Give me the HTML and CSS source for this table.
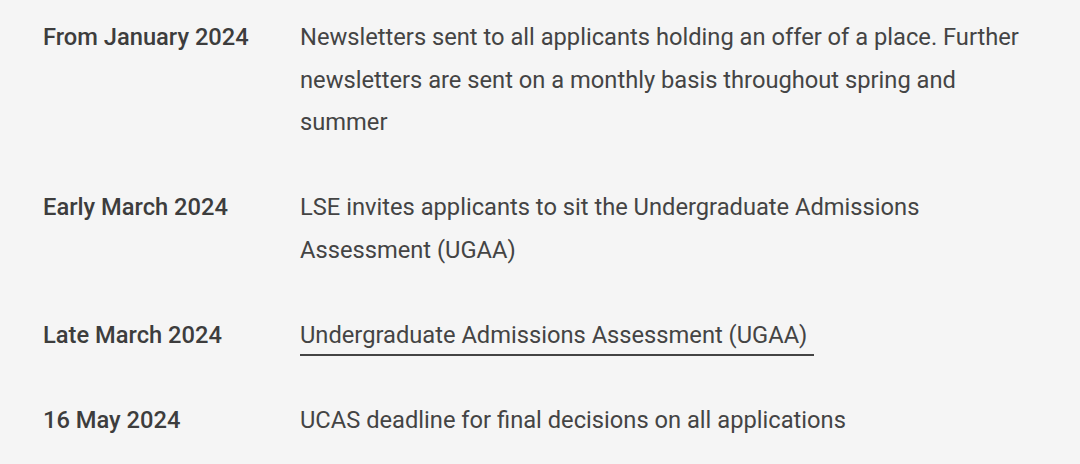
FILE: index.html
```html
<!DOCTYPE html>
<html lang="en">
<head>
<meta charset="utf-8">
<link rel="stylesheet" href="styles.css">
</head>
<body>
<dl class="timeline">
  <div class="row">
    <dt class="date">From January 2024</dt>
    <dd class="desc">Newsletters sent to all applicants holding an offer of a place. Further newsletters are sent on a monthly basis throughout spring and summer</dd>
  </div>
  <div class="row">
    <dt class="date">Early March 2024</dt>
    <dd class="desc">LSE invites applicants to sit the Undergraduate Admissions Assessment (UGAA)</dd>
  </div>
  <div class="row">
    <dt class="date">Late March 2024</dt>
    <dd class="desc"><a class="link" href="#">Undergraduate Admissions Assessment (UGAA)</a></dd>
  </div>
  <div class="row">
    <dt class="date">16 May 2024</dt>
    <dd class="desc">UCAS deadline for final decisions on all applications</dd>
  </div>
</dl>
</body>
</html>
```
FILE: styles.css
```css
html, body {
  margin: 0;
  padding: 0;
  background: #f5f5f5;
}
body {
  font-family: Roboto, "Liberation Sans", sans-serif;
  font-size: 23.7px;
  line-height: 42.5px;
  color: #444;
}
.timeline {
  margin: 0;
  padding: 16px 43px 0 43px;
  display: flex;
  flex-direction: column;
  gap: 42.5px;
}
.row {
  display: grid;
  grid-template-columns: 257px 1fr;
}
.date {
  font-weight: 500;
  color: #3d3d3d;
}
.desc {
  margin: 0;
}
.link {
  color: #444;
  text-decoration: none;
  border-bottom: 2px solid #444;
  padding-right: 7px;
  padding-bottom: 5px;
}
```
